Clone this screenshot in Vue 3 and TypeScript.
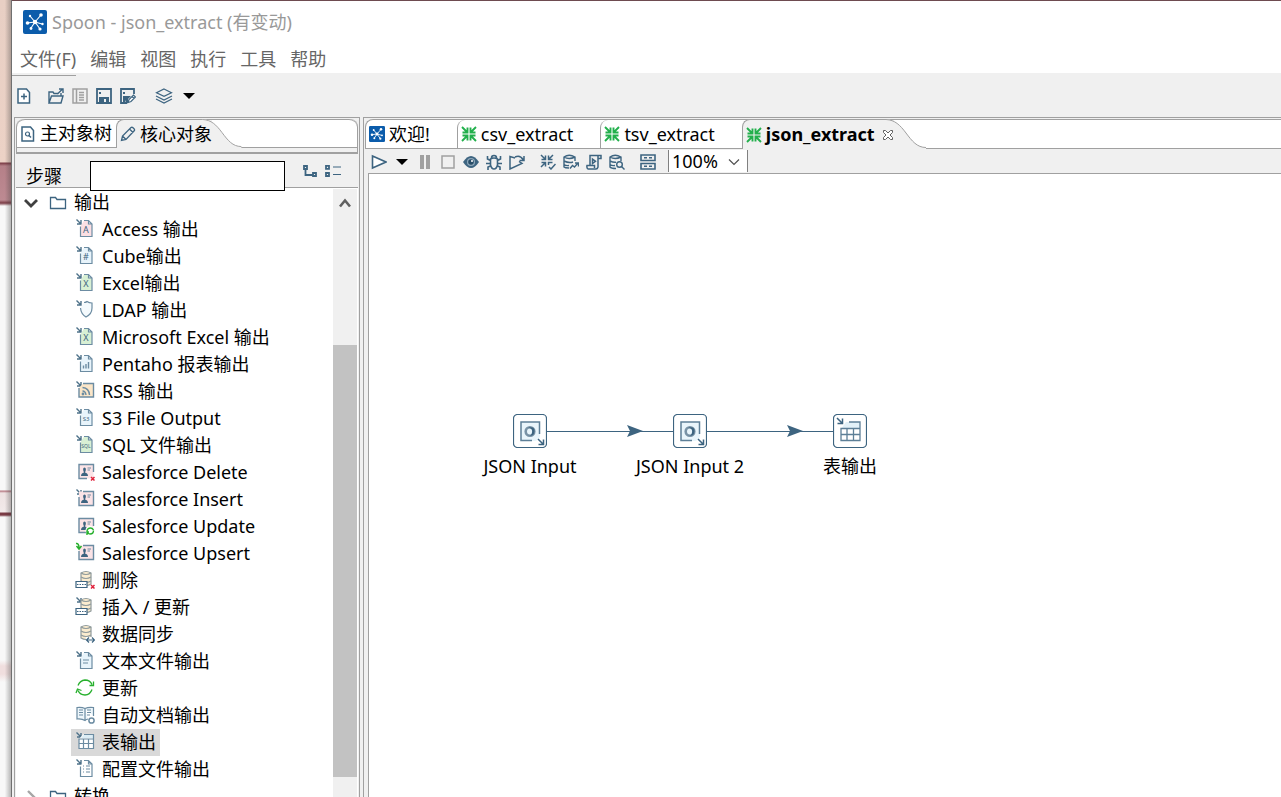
<script setup lang="ts">
import { ref } from 'vue'

interface TreeItem {
  label: string
  icon: string
  glyph?: string
  tint?: string
}

interface CanvasNode {
  label: string
  kind: 'json' | 'table'
  x: number
}

const menus: string[] = ['文件(F)', '编辑', '视图', '执行', '工具', '帮助']

const items: TreeItem[] = [
  { label: 'Access 输出', icon: 'doc', glyph: 'A', tint: '#fbdfe3' },
  { label: 'Cube输出', icon: 'doc', glyph: '#', tint: '#e8f4fb' },
  { label: 'Excel输出', icon: 'doc', glyph: 'X', tint: '#d8f0d4' },
  { label: 'LDAP 输出', icon: 'shield' },
  { label: 'Microsoft Excel 输出', icon: 'doc', glyph: 'X', tint: '#d8f0d4' },
  { label: 'Pentaho 报表输出', icon: 'report', tint: '#e8f4fb' },
  { label: 'RSS 输出', icon: 'rss' },
  { label: 'S3 File Output', icon: 'doc', glyph: 'S3', tint: '#e8f4fb' },
  { label: 'SQL 文件输出', icon: 'doc', glyph: 'SQL', tint: '#d8f0d4' },
  { label: 'Salesforce Delete', icon: 'sf-delete' },
  { label: 'Salesforce Insert', icon: 'sf-insert' },
  { label: 'Salesforce Update', icon: 'sf-update' },
  { label: 'Salesforce Upsert', icon: 'sf-upsert' },
  { label: '删除', icon: 'db-delete' },
  { label: '插入 / 更新', icon: 'db-insert' },
  { label: '数据同步', icon: 'db-sync' },
  { label: '文本文件输出', icon: 'text', tint: '#e8f4fb' },
  { label: '更新', icon: 'refresh' },
  { label: '自动文档输出', icon: 'book' },
  { label: '表输出', icon: 'table' },
  { label: '配置文件输出', icon: 'config', tint: '#ffffff' },
]

const selected = ref('表输出')
const keyword = ref('')
const zoomLevel = ref('100%')

const nodes: CanvasNode[] = [
  { label: 'JSON Input', kind: 'json', x: 101 },
  { label: 'JSON Input 2', kind: 'json', x: 261 },
  { label: '表输出', kind: 'table', x: 421 },
]

const glyphSize = (g: string): number => (g.length === 1 ? 9 : g.length === 2 ? 6 : 5)
const hasArrow = (icon: string): boolean =>
  ['doc', 'shield', 'report', 'rss', 'sf-insert', 'db-insert', 'text', 'table', 'config'].includes(icon)
const isDoc = (icon: string): boolean => ['doc', 'report', 'text', 'config'].includes(icon)
</script>

<template>
  <div class="desktop">
    <div class="wallpaper"></div>
    <div class="window">
      <header class="title">
        <svg class="logo" viewBox="0 0 24 24">
          <rect width="24" height="24" rx="2" fill="#0b5cab" />
          <path d="M12 12L7 6M12 12L18 5M12 12L4 13M12 12L19 14M12 12L8 18M12 12L17 19" stroke="#fff" stroke-width="1.1" />
          <g fill="#fff"><circle cx="12" cy="12" r="2.2" /><circle cx="7" cy="6" r="1.2" /><circle cx="18" cy="5" r="1.8" /><circle cx="4.5" cy="13" r="1.8" /><circle cx="19.5" cy="14" r="1.2" /><circle cx="8" cy="18.5" r="1.4" /><circle cx="17" cy="19" r="1.6" /></g>
        </svg>
        <h1>Spoon - json_extract (有变动)</h1>
      </header>
      <nav class="menu">
        <button v-for="m in menus" :key="m" type="button">{{ m }}</button>
      </nav>
      <div class="toolbar">
        <button type="button" class="first" aria-label="新建">
          <svg viewBox="0 0 16 16"><path d="M2 1h8.500l3 3.500V15H2z" fill="#fff" stroke="#3d6480" stroke-width="1.500" /><path d="M8 5.500v6M5 8.500h6" stroke="#3d6480" stroke-width="1.500" /></svg>
        </button>
        <button type="button" aria-label="打开">
          <svg viewBox="0 0 16 16" fill="none" stroke="#3d6480" stroke-width="1.400"><path d="M1 15V4h4l1 1.500h4M1 15L3.500 8H15l-2 7zM13 8V5" /><path d="M9.500 6l4.500-4.500M11 1h4v4" /></svg>
        </button>
        <button type="button" aria-label="浏览">
          <svg viewBox="0 0 16 16" fill="none" stroke="#a0a0a0" stroke-width="1.500"><path d="M1 1h14v14H1zM4.500 1v14M7 4.500h5M7 7h5M7 9.500h5M7 12h5" /></svg>
        </button>
        <button type="button" aria-label="保存">
          <svg viewBox="0 0 16 16"><path d="M1 1h14v14H1z" fill="none" stroke="#3d6480" stroke-width="1.800" /><path d="M3 9h10v6h-3v-4H8v4H3zM3 4h2v2H3z" fill="#3d6480" /></svg>
        </button>
        <button type="button" aria-label="另存为">
          <svg viewBox="0 0 16 16"><path d="M7 15H1V1h13v5" fill="none" stroke="#3d6480" stroke-width="1.800" /><path d="M3 8h8l-3 3v4H6v-3l-1 3H3zM3 4h2v2H3z" fill="#3d6480" /><path d="M8 14.500l1-3L13.500 7l2 2-4.500 4.500zM12 8.500l2 2" fill="#fff" stroke="#3d6480" stroke-width="1.200" /></svg>
        </button>
        <button type="button" class="layers" aria-label="视角">
          <svg viewBox="0 0 18 16" fill="none" stroke="#3d6480" stroke-width="1.200"><path d="M9 1l7.500 3.700L9 8.400 1.500 4.700zM1 8l8 4 8-4M1 11l8 4 8-4" /></svg>
          <svg class="caret" viewBox="0 0 12 6"><path d="M0 0h12L6 6z" fill="#000" /></svg>
        </button>
      </div>

      <div class="panes">
        <aside class="side">
          <div class="folder">
            <div class="tabs">
              <button type="button" class="tab">
                <svg viewBox="0 0 16 16" fill="none" stroke="#3d6480"><path d="M2 1h8.500l3 3.500V15H2z" stroke-width="1.500" /><circle cx="7.500" cy="8" r="2" stroke-width="1.200" /><path d="M9 9.500l2 2" stroke-width="1.400" /></svg>
                <span>主对象树</span>
              </button>
              <button type="button" class="tab active">
                <svg viewBox="0 0 16 16" fill="none" stroke="#3d6480" stroke-width="1.300"><path d="M1.500 14.500l1-4.500L11 1.500q1-.7 2 .3l1 1q1 1 .2 2L6 13.500zM9.500 3l3.500 3.500M2.500 10L6 13.500" /></svg>
                <span>核心对象</span>
              </button>
              <svg class="tail" viewBox="0 0 40 30"><path d="M0 0C9 1 14 6 20 14S31 28.500 40 28.500V30H0z" fill="#f0f0f0" /><path d="M0 .5C9 1 14 6 20 14S31 28.500 40 28.500" fill="none" stroke="#a0a0a0" /></svg>
            </div>
          </div>
          <div class="search">
            <label for="step">步骤</label>
            <input id="step" v-model="keyword" type="text" />
            <button type="button" aria-label="全部展开">
              <svg viewBox="0 0 16 14" fill="none" stroke="#3d6480" stroke-width="1.800"><path d="M2 2h3v3H2zM11 9h3v3h-3zM3.500 6v5h7" /></svg>
            </button>
            <button type="button" class="wide" aria-label="全部折叠">
              <svg viewBox="0 0 18 14" fill="none" stroke="#3d6480" stroke-width="1.800"><path d="M2 1.800h3v3H2zM2 9h3v3H2z" /><path d="M9 3h8M9 10.500h8" stroke-width="1.200" /></svg>
            </button>
          </div>
          <div class="tree-area">
            <ul class="tree">
              <li class="group">
                <button type="button">
                  <svg class="twist" viewBox="0 0 14 14"><path d="M1 4l6 6 6-6" fill="none" stroke="#404040" stroke-width="2.800" /></svg>
                  <svg class="dir" viewBox="0 0 18 16"><path d="M1.500 13.500v-11h5l1.500 2h8.500v9z" fill="none" stroke="#3d6480" stroke-width="1.300" /></svg>
                  <span>输出</span>
                </button>
              </li>
              <li v-for="it in items" :key="it.label" class="leaf">
                <button type="button" :class="{ selected: selected === it.label }" @click="selected = it.label">
                  <svg viewBox="0 0 20 20" fill="none" stroke="#6c8ca2" stroke-width="1.200">
                    <path v-if="hasArrow(it.icon)" d="M1.500 1.500l4 4M6 2v4H2" stroke="#4d7189" stroke-width="1.400" />
                    <template v-if="isDoc(it.icon)">
                      <path d="M9 2.500h4.500v3H17v13H5.500V8.500z" :fill="it.tint" stroke="none" />
                      <path d="M9 2.500h4.500l3.500 3.500v12.500H5.500V8.500M13.500 2.500V6H17" />
                    </template>
                    <text v-if="it.glyph" x="11" :y="it.glyph.length === 1 ? 15 : 14" :font-size="glyphSize(it.glyph)" text-anchor="middle" fill="#3d6480" stroke="none">{{ it.glyph }}</text>
                    <path v-if="it.icon === 'shield'" d="M9 3.500q2 0 3-1 2 1.500 5 1.500v5q0 6-6 9-5-3-5.500-9" fill="#f4fafd" />
                    <path v-if="it.icon === 'report'" d="M8.500 15.500v-3M11 15.500V11M13.500 15.500V9" stroke-width="1.400" />
                    <path v-if="it.icon === 'text'" d="M8 10h6M8 13h5" />
                    <path v-if="it.icon === 'config'" d="M8 8h1M11 8h4M8 11h1M11 11h4M8 14h1M11 14h4" />
                    <template v-if="it.icon === 'rss'">
                      <path d="M8 3.500h10.500v13.500H4V8z" fill="#fbe6c8" stroke="none" />
                      <path d="M8 3.500h10.500v13.500H4V8M7.500 11q3 0 3.500 4M7.500 7.500q6.500.5 7 7.500" stroke-width="1.400" /><circle cx="8" cy="14" r=".8" fill="#3d6480" />
                    </template>
                    <template v-if="it.icon.startsWith('sf')">
                      <path d="M4 3.500h14.500v14H4z" fill="#fbe3e6" stroke="none" />
                      <path v-if="it.icon === 'sf-delete' || it.icon === 'sf-update'" d="M12 17.500H4v-14h14.500V11" stroke-width="1.400" />
                      <path v-else d="M8 3.500h10.500v14H4V9" stroke-width="1.400" />
                      <path d="M6 15q0-3 3-3.500Q7 7 9.500 6.500 12 7 10 11.500q3 .5 3 3.500z" fill="#3d6480" stroke="none" />
                      <path d="M12.500 7H16M12.500 9H15" stroke-width="1" />
                    </template>
                    <template v-if="it.icon.startsWith('db')">
                      <path d="M6 4v11q5 3 10 0V4q-5-3-10 0z" fill="#fbeccf" stroke="#8f9a9c" />
                      <path d="M6 4q5 3 10 0M6 8q5 3 10 0M6 12q5 3 10 0" stroke="#8f9a9c" />
                      <path v-if="it.icon !== 'db-sync'" d="M1 12.500h11v6H1z" fill="#fff" stroke="#3d6480" /><path v-if="it.icon !== 'db-sync'" d="M2 15.500h9" stroke="#3d6480" stroke-dasharray="1.500 1" />
                      <g v-else><path d="M11 14h9v5h-9z" fill="#fff" stroke="none" /><path d="M11.500 17h8M14 14.500L11.500 17l2.500 2.500M17 14.500l2.500 2.500-2.500 2.500" stroke="#3d6480" /></g>
                    </template>
                    <path v-if="it.icon.endsWith('delete')" d="M16 16l3.500 3.500M19.500 16L16 19.500" stroke="#e0223c" stroke-width="1.500" />
                    <g v-if="it.icon === 'sf-update'"><circle cx="15" cy="15.500" r="4.500" fill="#fff" stroke="none" /><path d="M12 17v-1q.5-3 3.500-3 2 0 3 2M18.500 15.500q0 3.500-3.500 3.500-2 0-3-2M12 20v-3h2" stroke="#27b02d" stroke-width="1.400" /></g>
                    <path v-if="it.icon === 'sf-upsert'" d="M1 1.500q3-.5 3 4.500M1.500 4L4 7l2.500-3" stroke="#27b02d" stroke-width="1.500" />
                    <path v-if="it.icon === 'refresh'" d="M3 8.500q2-5 7-5.500 5 0 7 4.500M18.500 4.500v4h-4M17 12.500q-2 5.500-7 5.500t-7-4.500M1 16l1.500-4 4 1.500" stroke="#27b02d" stroke-width="1.300" />
                    <template v-if="it.icon === 'book'">
                      <path d="M10 4.500Q7 3 2 3.500V15q5-.5 8 1.500 1-1 3-1.500M10 4.500q3-1.500 8.500-1V12M10 4.500v12" fill="#edf6fb" />
                      <path d="M4 6h4M4 8.500h4M4 11h4M12 6h4M12 8.500h4M12 11h3" stroke-width="1" /><circle cx="16.500" cy="16.500" r="2.600" fill="#fff" stroke-width="1.500" />
                    </template>
                    <template v-if="it.icon === 'table'">
                      <path d="M8 3.500h10.500v14H4V8z" fill="#fff" stroke="none" /><path d="M9 3.500h9V7H6z" fill="#dcedf5" stroke="none" />
                      <path d="M9 3.500h9.500v14H4V8h14.500M4 12.500h14.500M8.500 8v9.500M13.500 8v9.500" />
                    </template>
                  </svg>
                  <span>{{ it.label }}</span>
                </button>
              </li>
              <li class="group">
                <button type="button">
                  <svg class="twist" viewBox="0 0 14 14"><path d="M4 1l6 6-6 6" fill="none" stroke="#a6a6a6" stroke-width="2.400" /></svg>
                  <svg class="dir" viewBox="0 0 18 16"><path d="M1.500 13.500v-11h5l1.500 2h8.500v9z" fill="none" stroke="#3d6480" stroke-width="1.300" /></svg>
                  <span>转换</span>
                </button>
              </li>
            </ul>
            <div class="scrollbar">
              <svg viewBox="0 0 12 10"><path d="M1 8.500l5-6 5 6" fill="none" stroke="#606060" stroke-width="2.600" /></svg>
              <div class="thumb"></div>
            </div>
          </div>
        </aside>

        <main class="editor">
          <div class="tabs">
            <button type="button" class="tab">
              <svg viewBox="0 0 24 24"><rect width="24" height="24" rx="2" fill="#0b5cab" /><path d="M12 12L7 6M12 12L18 5M12 12L4 13M12 12L19 14M12 12L8 18M12 12L17 19" stroke="#fff" stroke-width="1.300" /><g fill="#fff"><circle cx="12" cy="12" r="2.200" /><circle cx="7" cy="6" r="1.400" /><circle cx="18" cy="5" r="1.900" /><circle cx="4.500" cy="13" r="1.900" /><circle cx="19.500" cy="14" r="1.400" /><circle cx="8" cy="18.500" r="1.500" /><circle cx="17" cy="19" r="1.700" /></g></svg>
              <span>欢迎!</span>
            </button>
            <button v-for="t in ['csv_extract', 'tsv_extract', 'json_extract']" :key="t" type="button" class="tab" :class="{ active: t === 'json_extract' }">
              <svg viewBox="0 0 16 16" fill="none" stroke="#22b04c" stroke-width="1.900"><path d="M1 1l5 5M6.500 1.500v5h-5M15 1l-5 5M9.500 1.500v5h5M1 15l5-5M6.500 14.500v-5h-5M15 15l-5-5M9.500 14.500v-5h5" /></svg>
              <span>{{ t }}</span>
              <svg v-if="t === 'json_extract'" class="close" viewBox="0 0 12 12"><path d="M1.500 1.500h2L6 4l2.500-2.500h2v2L8 6l2.500 2.500v2h-2L6 8l-2.500 2.500h-2v-2L4 6 1.500 3.500z" fill="#fff" stroke="#606060" /></svg>
            </button>
            <svg class="tail" viewBox="0 0 40 30"><path d="M0 0C9 1 14 6 20 14S31 28.500 40 28.500V30H0z" fill="#f0f0f0" /><path d="M0 .5C9 1 14 6 20 14S31 28.500 40 28.500" fill="none" stroke="#a0a0a0" /></svg>
          </div>
          <div class="actions">
            <button type="button" aria-label="运行"><svg viewBox="0 0 16 16"><path d="M1.500 2v12L15 8z" fill="#fff" stroke="#3d6480" stroke-width="1.600" /></svg></button>
            <button type="button" aria-label="运行选项"><svg viewBox="0 0 16 16"><path d="M2 5h12l-6 6z" fill="#000" /></svg></button>
            <button type="button" aria-label="暂停"><svg viewBox="0 0 16 16"><path d="M3 1h4v14H3zM9 1h4v14H9z" fill="#a0a0a0" /></svg></button>
            <button type="button" aria-label="停止"><svg viewBox="0 0 16 16"><path d="M2 2h12v12H2z" fill="none" stroke="#a0a0a0" stroke-width="1.500" /></svg></button>
            <button type="button" aria-label="预览"><svg viewBox="0 0 16 16"><path d="M0 8q8-12 16 0-8 12-16 0z" fill="#3d6480" /><circle cx="8" cy="8" r="4" fill="#8fa8ba" /><circle cx="8" cy="8" r="2.800" fill="#284d68" /><circle cx="9" cy="7" r="1" fill="#fff" /></svg></button>
            <button type="button" aria-label="调试"><svg viewBox="0 0 16 16" fill="none" stroke="#3d6480" stroke-width="1.600"><path d="M4.500 5q3.500-2 7 0v6q-1 4-3.500 4t-3.500-4zM5.500 4q0-2.500 2.500-2.500T10.500 4M4.500 6.500L1.500 5V2M11.500 6.500l3-1.500V2M4.500 9.500H0M11.500 9.500H16M4.500 12L2 13v3M11.500 12l2.500 1v3" /></svg></button>
            <button type="button" class="spaced" aria-label="重放"><svg viewBox="0 0 16 16" fill="none" stroke="#3d6480" stroke-width="1.500"><path d="M6 4L1 2.500v12.500L13 9.500l-3-2M6 3q5-2.500 8 2.500M15 2v4.500h-4.500" /></svg></button>
            <button type="button" aria-label="校验"><svg viewBox="0 0 16 16" fill="none" stroke="#3d6480" stroke-width="1.500"><path d="M1 1l4 4M5.500 1.500v4h-4M13 1L9 5M8.500 1.500v4h4M1 13l4-4M5.500 12.500v-4h-4M8.500 11V8.500h4M9 13l2 2 4.500-5" /></svg></button>
            <button type="button" aria-label="影响"><svg viewBox="0 0 16 16" fill="none" stroke="#3d6480" stroke-width="1.400"><path d="M6 14q-4 0-5-1V3q5-3.500 11 0v4M1 3q5 3 11 0M1 7q5 2.500 9 1M1 10.500q2 1.500 5 1M7 14.500l2.500-3 2 1.500 3.500-4M12 9h3.500v3.500" /></svg></button>
            <button type="button" aria-label="SQL"><svg viewBox="0 0 16 16" fill="none" stroke="#3d6480" stroke-width="1.500"><path d="M4 11V1.500h11v3h-3V13q-.5 2-2 2H2q-1.500-1-1-3.500h7.500V14M12 1.500v4M6.500 5l3 2.300-3 2.300z" /></svg></button>
            <button type="button" class="spaced" aria-label="浏览数据库"><svg viewBox="0 0 16 16" fill="none" stroke="#3d6480" stroke-width="1.400"><path d="M7 14.500q-5 0-6-1.500V3q5-3.500 11 0v4M1 3q5 3 11 0M1 7q3 1.500 6 1.200M1 10.500q2 1.500 5 1" /><circle cx="10.500" cy="10.500" r="2.800" /><path d="M12.500 12.500l3 3" /></svg></button>
            <button type="button" aria-label="显示结果"><svg viewBox="0 0 16 16" fill="none" stroke="#3d6480" stroke-width="1.600"><path d="M1 1h14v5.500H1zM1 9.500h14V15H1zM4 3.700h3M9 3.700h3M4 12.200h3M9 12.200h3" /></svg></button>
            <div class="combo">
              <select v-model="zoomLevel" aria-label="缩放">
                <option>200%</option>
                <option>100%</option>
                <option>50%</option>
              </select>
              <svg viewBox="0 0 12 8"><path d="M1 1.500l5 5 5-5" fill="none" stroke="#505050" stroke-width="1.200" /></svg>
            </div>
          </div>
          <section class="canvas">
            <svg class="hops" viewBox="0 0 520 40" fill="#3d6480" stroke="#3d6480">
              <path d="M178 17.500h126M338 17.500h126" />
              <path d="M258 11l16 6-16 6 3-6zM418 11l16 6-16 6 3-6z" stroke="none" />
            </svg>
            <div v-for="n in nodes" :key="n.label" class="node" :style="{ left: n.x + 'px' }">
              <svg viewBox="0 0 34 34" fill="none" stroke="#5d7f97" stroke-width="1.500">
                <rect x=".5" y=".5" width="33" height="33" rx="4" fill="#fff" stroke="#3d6480" stroke-width="1.200" />
                <template v-if="n.kind === 'json'">
                  <path d="M8 8h19v15l-4 4H8z" fill="#e9f5fb" stroke="none" />
                  <path d="M19 26.500H8V8h18.500v12" />
                  <circle cx="17" cy="17.500" r="4.300" stroke="#7993a6" stroke-width="2.600" />
                  <path d="M15 13.500q5 1 4 5t-4 3q6 1.500 6.500-4T15 13.500z" fill="#3d6480" stroke="none" />
                  <path d="M25 25l5 5M30.500 25.500v5h-5" stroke="#3d6480" />
                </template>
                <template v-else>
                  <path d="M13 8h14v7H8z" fill="#e3f1f8" stroke="none" />
                  <path d="M16 8h11v18.500H8V14.500h19M8 20.500h19M14 14.500v12M20.500 14.500v12" stroke-width="1.300" />
                  <path d="M4 4l5 5M9.500 4.500v5h-5" stroke="#3d6480" />
                </template>
              </svg>
              <span>{{ n.label }}</span>
            </div>
          </section>
        </main>
      </div>
    </div>
  </div>
</template>

<style>
body {
  margin: 0;
}
</style>

<style scoped>
* {
  box-sizing: border-box;
}
.desktop {
  display: flex;
  height: 100vh;
  overflow: hidden;
  font: 18px/27px "Noto Sans", "Noto Sans CJK SC", sans-serif;
  color: #000;
  background: #fff;
}
svg {
  display: block;
  flex: none;
}
button {
  display: flex;
  align-items: center;
  margin: 0;
  padding: 0;
  border: 0;
  background: none;
  font: inherit;
  color: inherit;
  white-space: nowrap;
}
.wallpaper {
  flex: none;
  width: 12px;
  background:
    linear-gradient(90deg, transparent 40%, rgba(60, 60, 60, 0.35) 92%, #707070 93%),
    linear-gradient(#e8cfc4, #ecd2c6 162px, #7b3b45 163px, #b58088 166px, #bd8a92 200px, #7b3b45 203px, #f8f8f8 206px, #f8f8f8 490px, #b57680 491px, #eee2e2 493px, #f2eaea 512px, #7b3b45 513px, #7b3b45 515px, #f8f8f8 517px, #f8f8f8 660px, #f0dede 666px, #f0dede 674px, #f8f8f8 682px);
}
.window {
  flex: 1;
  min-width: 0;
  display: flex;
  flex-direction: column;
  border-top: 1px solid #6e4b50;
  background: #f0f0f0;
}
.title {
  display: flex;
  align-items: center;
  gap: 5px;
  height: 42px;
  padding-left: 11px;
  background: #fff;
}
.logo {
  width: 24px;
  height: 24px;
}
.title h1 {
  margin: 0;
  font: inherit;
  color: #999;
}
.menu {
  display: flex;
  gap: 14px;
  height: 30px;
  padding: 2px 8px 0;
  background: #fff;
  color: #666;
}
.toolbar {
  display: flex;
  align-items: center;
  gap: 8px;
  height: 44px;
  padding: 2px 4px 0;
  background: linear-gradient(#a0a0a0, #a0a0a0) 0 2px / 64px 1px no-repeat;
}
.toolbar svg {
  width: 16px;
  height: 16px;
}
.toolbar .first {
  margin-right: 8px;
}
.toolbar .layers {
  gap: 10px;
  margin-left: 11px;
}
.toolbar .layers svg {
  width: 18px;
}
.toolbar .layers .caret {
  width: 12px;
  height: 6px;
}
.panes {
  flex: 1;
  min-height: 0;
  display: flex;
  gap: 3px;
  padding-left: 2px;
}
.side {
  flex: none;
  width: 346px;
  display: flex;
  flex-direction: column;
  border: 1px solid #a0a0a0;
  border-bottom: 0;
  padding: 1px 1px 0;
}
.folder {
  border: solid #a0a0a0;
  border-width: 0 1px 2px;
  padding-bottom: 4px;
  border-radius: 8px 8px 0 0;
}
.tabs {
  display: flex;
  flex: none;
  height: 29px;
  border: solid #a0a0a0;
  border-width: 1px 0;
  border-radius: 8px 8px 0 0;
  background: #fff;
}
.tab {
  gap: 4px;
  padding: 0 4px 0 3px;
}
.tab svg {
  width: 16px;
  height: 16px;
}
.tab.active {
  margin: -1px 0;
  padding-right: 0;
  border: solid #a0a0a0;
  border-width: 1px 0 0 1px;
  border-radius: 8px 0 0 0;
  background: #f0f0f0;
}
/* The label and close mark stay above the sloping end of the active tab. */
.tab.active span,
.tab.active .close {
  position: relative;
  z-index: 1;
}
.tabs .tail {
  width: 40px;
  height: 30px;
  margin: -1px 0;
}
.folder .tail {
  height: 29px;
  margin-left: -10px;
}
.search {
  display: flex;
  flex: none;
  align-items: flex-start;
  height: 34px;
  padding: 7px 10px 0;
  border-bottom: 1px solid #a0a0a0;
}
.search label {
  width: 64px;
  padding-top: 2px;
}
.search input {
  position: relative;
  z-index: 1;
  width: 195px;
  height: 30px;
  margin-right: 17px;
  padding: 0 6px;
  border: 1px solid #000;
  border-radius: 0;
  background: #fff;
  font: inherit;
}
.search button {
  margin-right: 6px;
  padding-top: 3px;
}
.search svg {
  width: 16px;
  height: 14px;
}
.search .wide svg {
  width: 18px;
}
.tree-area {
  flex: 1;
  min-height: 0;
  display: flex;
  padding-top: 1px;
  background: #fff;
}
.tree {
  flex: 1;
  margin: 0;
  padding: 0;
  list-style: none;
  overflow: hidden;
}
.tree button {
  height: 27px;
}
.group button {
  padding-left: 8px;
}
.twist {
  width: 14px;
  height: 14px;
  margin-right: 11px;
}
.dir {
  width: 18px;
  height: 16px;
  margin-right: 7px;
}
.leaf button {
  gap: 7px;
  margin-left: 55px;
  padding: 0 4px;
}
.leaf svg {
  width: 20px;
  height: 20px;
  margin-bottom: 3px;
}
.leaf .selected {
  background: #d9d9d9;
}
.scrollbar {
  flex: none;
  display: flex;
  flex-direction: column;
  align-items: center;
  width: 24px;
  margin-right: 1px;
  background: #f0f0f0;
}
.scrollbar svg {
  width: 12px;
  height: 10px;
  margin: 9px 0 0;
}
.thumb {
  width: 100%;
  flex: 0 0 71%;
  margin-top: 137px;
  background: #c2c2c2;
}
.editor {
  flex: 1;
  min-width: 0;
  display: flex;
  flex-direction: column;
  border: solid #a0a0a0;
  border-width: 1px 0 0 1px;
  padding: 1px 0 0 1px;
}
.editor .tabs {
  height: 30px;
  border-left-width: 1px;
  border-radius: 8px 0 0 0;
}
.editor .tab {
  padding-right: 27px;
}
.editor .tab + .tab {
  border-left: 1px solid #a0a0a0;
  border-radius: 8px 0 0 0;
}
.editor .tab.active {
  padding-right: 0;
  font-weight: 700;
}
.editor .tab .close {
  width: 12px;
  height: 12px;
  margin-left: 3px;
}
.editor .tail {
  margin-left: -8px;
}
.actions {
  display: flex;
  flex: none;
  align-items: center;
  gap: 7px;
  height: 24px;
  padding: 1px 0 0 6px;
}
.actions svg {
  width: 16px;
  height: 16px;
}
.actions .spaced {
  margin-right: 8px;
}
.combo {
  position: relative;
  align-self: stretch;
  margin-left: 5px;
}
.combo select {
  appearance: none;
  display: block;
  width: 80px;
  height: 22px;
  padding: 0 20px 0 3px;
  border: solid #808080;
  border-width: 0 1px;
  border-radius: 0;
  background: #fff;
  font: inherit;
  line-height: 22px;
  color: #000;
}
.combo svg {
  position: absolute;
  top: 8px;
  right: 8px;
  width: 12px;
  height: 8px;
  pointer-events: none;
}
.canvas {
  position: relative;
  flex: 1;
  margin-left: 3px;
  border: solid #a0a0a0;
  border-width: 1px 0 0 1px;
  background: #fff;
}
.hops {
  position: absolute;
  left: 0;
  top: 240px;
  width: 520px;
  height: 40px;
}
.node {
  position: absolute;
  top: 240px;
  display: flex;
  flex-direction: column;
  align-items: center;
  gap: 5px;
  width: 120px;
  white-space: nowrap;
}
.node svg {
  width: 34px;
  height: 34px;
}
</style>
